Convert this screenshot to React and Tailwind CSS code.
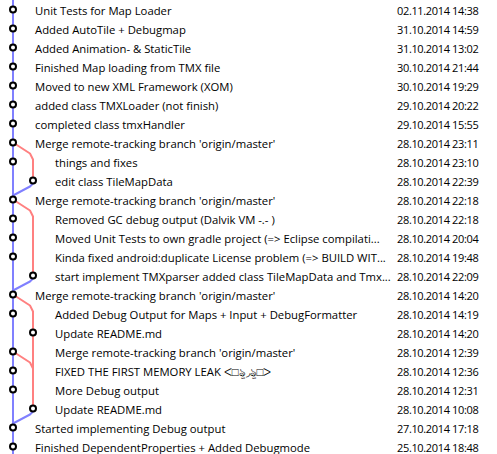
import React from 'react';

const ROW = 19;

const COMMITS = [
  { msg: 'Unit Tests for Map Loader', date: '02.11.2014 14:38', lane: 0, indent: false },
  { msg: 'Added AutoTile + Debugmap', date: '31.10.2014 14:59', lane: 0, indent: false },
  { msg: 'Added Animation- & StaticTile', date: '31.10.2014 13:02', lane: 0, indent: false },
  { msg: 'Finished Map loading from TMX file', date: '30.10.2014 21:44', lane: 0, indent: false },
  { msg: 'Moved to new XML Framework (XOM)', date: '30.10.2014 19:29', lane: 0, indent: false },
  { msg: 'added class TMXLoader (not finish)', date: '29.10.2014 20:22', lane: 0, indent: false },
  { msg: 'completed class tmxHandler', date: '29.10.2014 15:55', lane: 0, indent: false },
  { msg: "Merge remote-tracking branch 'origin/master'", date: '28.10.2014 23:11', lane: 0, indent: false },
  { msg: 'things and fixes', date: '28.10.2014 23:10', lane: 0, indent: true },
  { msg: 'edit class TileMapData', date: '28.10.2014 22:39', lane: 1, indent: true },
  { msg: "Merge remote-tracking branch 'origin/master'", date: '28.10.2014 22:18', lane: 0, indent: false },
  { msg: 'Removed GC debug output (Dalvik VM -.- )', date: '28.10.2014 22:18', lane: 0, indent: true },
  { msg: 'Moved Unit Tests to own gradle project (=> Eclipse compilati...', date: '28.10.2014 20:04', lane: 0, indent: true },
  { msg: 'Kinda fixed android:duplicate License problem (=> BUILD WIT...', date: '28.10.2014 19:48', lane: 0, indent: true },
  { msg: 'start implement TMXparser added class TileMapData and Tmx...', date: '28.10.2014 22:09', lane: 1, indent: true },
  { msg: "Merge remote-tracking branch 'origin/master'", date: '28.10.2014 14:20', lane: 0, indent: false },
  { msg: 'Added Debug Output for Maps + Input + DebugFormatter', date: '28.10.2014 14:19', lane: 0, indent: true },
  { msg: 'Update README.md', date: '28.10.2014 14:20', lane: 1, indent: true },
  { msg: "Merge remote-tracking branch 'origin/master'", date: '28.10.2014 12:39', lane: 0, indent: true },
  { msg: 'FIXED THE FIRST MEMORY LEAK ᐸ□ৡ◞ৡ□ᐳ', date: '28.10.2014 12:36', lane: 0, indent: true },
  { msg: 'More Debug output', date: '28.10.2014 12:31', lane: 0, indent: true },
  { msg: 'Update README.md', date: '28.10.2014 10:08', lane: 1, indent: true },
  { msg: 'Started implementing Debug output', date: '27.10.2014 17:18', lane: 0, indent: false },
  { msg: 'Finished DependentProperties + Added Debugmode', date: '25.10.2014 18:48', lane: 0, indent: false },
];

const cy = (i) => i * ROW + 9.5;
const laneX = (l) => (l === 0 ? 13 : 33);

// branch out of lane 0 into lane 1, from row a down to row b
const branchOut = (a, b) =>
  `M13 ${cy(a)} L30 ${cy(a) + 11} L33 ${cy(a) + 17} L33 ${cy(b)}`;
// lane 1 node at row a back into lane 0 at row a+1
const branchIn = (a) =>
  `M33 ${cy(a)} L33 ${cy(a) + 3} L30 ${cy(a) + 6} L13 ${cy(a) + 15} L13 ${cy(a + 1)}`;

function Graph() {
  const h = COMMITS.length * ROW;
  return (
    <svg
      className="absolute left-0 top-0 pointer-events-none"
      width="40"
      height={h}
      viewBox={`0 0 40 ${h}`}
    >
      <g fill="none" strokeWidth="2" strokeLinejoin="round" strokeLinecap="round">
        <path d={branchOut(7, 9)} stroke="#ff8080" />
        <path d={branchOut(10, 14)} stroke="#ff8080" />
        <path d={branchOut(15, 21)} stroke="#ff8080" />
        <path d={`M13 ${cy(18)} L30 ${cy(18) + 11} L33 ${cy(18) + 17}`} stroke="#ff8080" />
        <path d={branchIn(9)} stroke="#8080ff" />
        <path d={branchIn(14)} stroke="#8080ff" />
        <path d={branchIn(21)} stroke="#8080ff" />
        <path d={`M13 0 L13 ${h}`} stroke="#8080ff" strokeLinecap="butt" />
      </g>
      {COMMITS.map((c, i) => (
        <circle key={i} cx={laneX(c.lane)} cy={cy(i)} r="3" fill="#fff" stroke="#000" strokeWidth="2" />
      ))}
    </svg>
  );
}

export default function App() {
  return (
    <div
      className="relative w-[497px] h-[454px] overflow-hidden bg-white text-black text-[11px]"
      style={{ fontFamily: '"Open Sans", "Noto Sans", sans-serif' }}
    >
      <Graph />
      <div className="flex flex-col">
        {COMMITS.map((c, i) => (
          <div key={i} className="flex items-start h-[19px] pt-[2px] leading-[17px]">
            <div className={`${c.indent ? 'pl-[55px]' : 'pl-[35px]'} w-[397px] truncate pr-1 text-[11.3px]`}>
              {c.msg}
            </div>
            <div className="whitespace-nowrap tracking-[-0.35px]">{c.date}</div>
          </div>
        ))}
      </div>
    </div>
  );
}
